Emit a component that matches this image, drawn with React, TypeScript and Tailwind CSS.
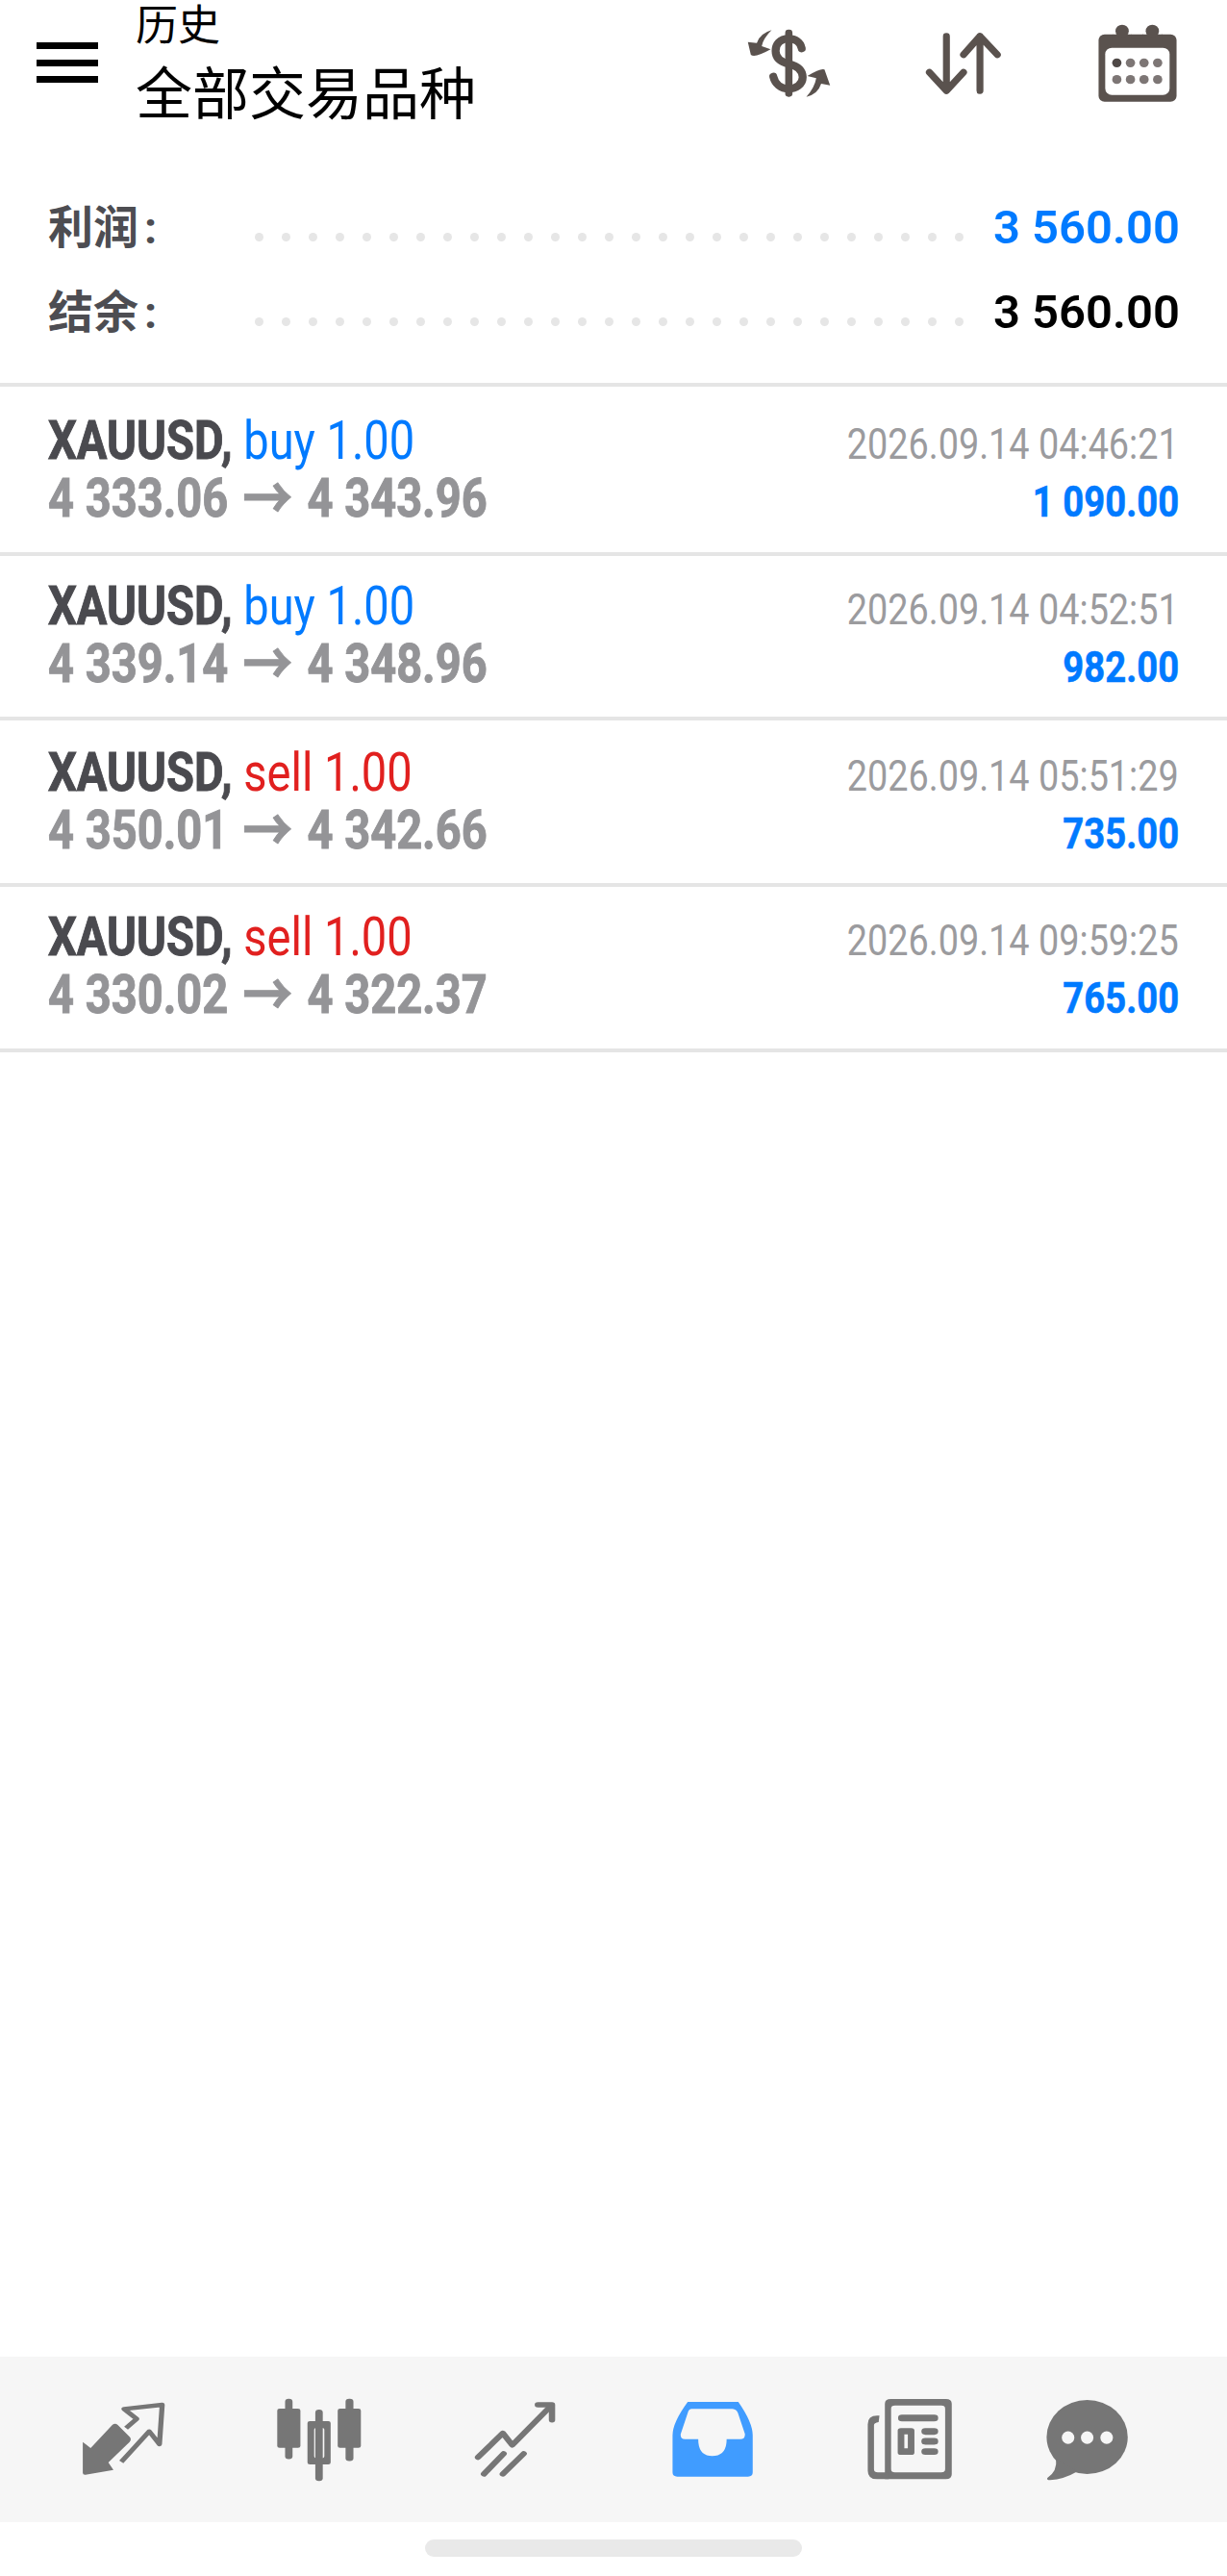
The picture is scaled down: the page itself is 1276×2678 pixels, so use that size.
import React from "react";

const trades = [
  { side: "buy", box: "h-[176px] pt-[26px]", open: "4 333.06", close: "4 343.96", time: "2026.09.14 04:46:21", profit: "1 090.00" },
  { side: "buy", box: "h-[171px] pt-[22px]", open: "4 339.14", close: "4 348.96", time: "2026.09.14 04:52:51", profit: "982.00" },
  { side: "sell", box: "h-[173px] pt-[24px]", open: "4 350.01", close: "4 342.66", time: "2026.09.14 05:51:29", profit: "735.00" },
  { side: "sell", box: "h-[172px] pt-[22px]", open: "4 330.02", close: "4 322.37", time: "2026.09.14 09:59:25", profit: "765.00" },
];

const dots = Array.from({ length: 27 }, (_, i) => i);

function DotLine() {
  return (
    <div className="flex gap-[19px] mt-[18px] -ml-[1px]">
      {dots.map((d) => (
        <span key={d} className="w-[9px] h-[9px] rounded-full bg-[#e6e6e6]" />
      ))}
    </div>
  );
}

function DollarIcon() {
  return (
    <svg viewBox="105 85 265 225" preserveAspectRatio="none" className="w-[91px] h-[75px]" fill="#5a524e">
      <rect x="226" y="93" width="22" height="210" rx="10" />
      <path d="M276 152C272 132 256 122 237 122C208 122 197 140 197 160C197 185 215 195 237 200C265 207 279 222 279 242C279 265 258 278 237 278C212 278 195 262 190 240" fill="none" stroke="#5a524e" strokeWidth="24" strokeLinecap="round" />
      <path d="M185 95Q150 105 140 135L113 132L122 172Q135 182 182 155L155 145Q160 120 185 95Z" />
      <path d="M290 303Q325 295 335 262L362 267L345 218Q335 212 293 238L320 245Q315 275 290 303Z" />
    </svg>
  );
}

function SortIcon() {
  return (
    <svg viewBox="650 95 240 205" preserveAspectRatio="none" className="w-[82px] h-[68px]" fill="none" stroke="#5a524e" strokeWidth="21" strokeLinecap="round" strokeLinejoin="round">
      <path d="M718 112V283M666 225L718 283L770 225" />
      <path d="M820 283V112M770 170L820 112L873 170" />
    </svg>
  );
}

function CalendarIcon() {
  return (
    <svg viewBox="1170 65 255 255" preserveAspectRatio="none" className="w-[88px] h-[85px]">
      <rect x="1180" y="103" width="235" height="210" rx="18" fill="#5a524e" />
      <rect x="1200" y="145" width="194" height="147" rx="20" fill="#fff" />
      <circle cx="1251" cy="95" r="29" fill="#fff" />
      <circle cx="1342" cy="95" r="29" fill="#fff" />
      <path d="M1222 103H1280V118H1312V103H1372V125H1222Z" fill="#5a524e" />
      <circle cx="1251" cy="93" r="20" fill="#5a524e" />
      <circle cx="1342" cy="93" r="20" fill="#5a524e" />
      {[192, 244].map((y) =>
        [1235, 1276, 1317, 1358].map((x) => (
          <circle key={`${x}-${y}`} cx={x} cy={y} r="14" fill={x === 1235 && y === 192 ? "#4f4947" : "#7d7675"} />
        ))
      )}
    </svg>
  );
}

function QuotesIcon() {
  return (
    <svg viewBox="205 200 225 240" preserveAspectRatio="none" className="w-[92px] h-[80px]">
      <path d="M215 328L235 347L290 275Q297 268 304 275L334 312Q340 320 334 328L280 392L293 415L222 430Q215 431 215 424Z" fill="#767676" />
      <path d="M325 285L352 256L320 225L417 212L410 335L384 295L313 390" fill="none" stroke="#767676" strokeWidth="13" strokeLinejoin="round" />
    </svg>
  );
}

function CandlesIcon() {
  return (
    <svg viewBox="695 175 240 280" preserveAspectRatio="none" className="w-[98px] h-[93px]" fill="#767676">
      <rect x="728" y="186" width="19" height="189" rx="9" />
      <rect x="708" y="217" width="59" height="123" rx="6" />
      <rect x="805" y="220" width="19" height="224" rx="9" />
      <path fillRule="evenodd" d="M791 256H838Q844 256 844 262V386Q844 392 838 392H791Q785 392 785 386V262Q785 256 791 256ZM808 277Q802 277 802 283V366Q802 372 808 372H822Q828 372 828 366V283Q828 277 822 277Z" />
      <rect x="882" y="186" width="20" height="195" rx="9" />
      <rect x="862" y="217" width="59" height="123" rx="6" />
    </svg>
  );
}

function TrendIcon() {
  return (
    <svg viewBox="1205 190 220 245" preserveAspectRatio="none" className="w-[90px] h-[82px]" fill="none" stroke="#767676" strokeLinecap="round" strokeLinejoin="round" strokeWidth="16">
      <path d="M1220 368L1283 293L1307 330L1400 215" />
      <path d="M1372 205H1408V252" />
      <path d="M1235 420L1285 357" />
      <path d="M1283 420L1336 357" />
    </svg>
  );
}

function InboxIcon() {
  return (
    <svg viewBox="140 190 220 245" preserveAspectRatio="none" className="w-[89px] h-[82px]">
      <path fillRule="evenodd" fill="#409cff" d="M185 196H315Q352 260 352 300V415Q352 428 340 428H158Q146 428 146 415V300Q146 260 185 196ZM195 218Q188 218 185 230L167 295Q165 312 178 312H212Q212 364 248 364Q285 364 285 312H320Q333 312 332 295L314 230Q310 218 300 218Z" />
    </svg>
  );
}

function NewsIcon() {
  return (
    <svg viewBox="640 180 230 265" preserveAspectRatio="none" className="w-[93px] h-[88px]" fill="#767676">
      <path fillRule="evenodd" d="M705 186H847Q862 186 862 201V422Q862 437 847 437H690V201Q690 186 705 186ZM716 206Q706 206 706 216V406Q706 416 716 416H835Q845 416 845 406V216Q845 206 835 206Z" />
      <path d="M676 238H670Q646 238 646 265V410Q646 437 670 437H700V416H672Q662 416 662 406V268Q662 260 674 258Z" />
      <rect x="724" y="235" width="103" height="21" rx="10" />
      <path fillRule="evenodd" d="M731 277H758Q766 277 766 285V353Q766 361 758 361H731Q723 361 723 353V285Q723 277 731 277ZM740 297V340H749V297Z" />
      <rect x="784" y="277" width="43" height="21" rx="10" />
      <rect x="784" y="308" width="43" height="21" rx="10" />
      <rect x="784" y="340" width="43" height="21" rx="10" />
    </svg>
  );
}

function ChatIcon() {
  return (
    <svg viewBox="1100 180 222 262" preserveAspectRatio="none" className="w-[90px] h-[87px]" fill="#767676">
      <ellipse cx="1210" cy="302" rx="104" ry="116" />
      <path d="M1130 370Q1134 410 1108 430Q1105 437 1115 437Q1150 435 1185 410Z" />
      {[1161, 1210, 1260].map((x) => (
        <ellipse key={x} cx={x} cy="304" rx="16" ry="20" fill="#f6f6f6" />
      ))}
    </svg>
  );
}

export default function App() {
  return (
    <div className="w-[1276px] h-[2678px] bg-white flex flex-col font-['Roboto','Noto_Sans_CJK_SC',sans-serif]">
      <header className="h-[142px] flex items-start shrink-0">
        <div className="ml-[38px] mt-[44px] w-[64px] h-[42px] flex flex-col justify-between">
          <span className="h-[7px] bg-black" />
          <span className="h-[7px] bg-black" />
          <span className="h-[7px] bg-black" />
        </div>
        <div className="ml-[39px] pt-[1px] flex flex-col text-black">
          <span className="text-[44px] leading-[52px]">历史</span>
          <span className="mt-[2px] text-[59px] leading-[87px]">全部交易品种</span>
        </div>
        <div className="ml-auto flex items-center mt-[23px] mr-[49px]">
          <DollarIcon />
          <div className="ml-[95px]"><SortIcon /></div>
          <div className="ml-[96px]"><CalendarIcon /></div>
        </div>
      </header>

      <section className="pt-[51px] pb-[29px] pl-[50px] pr-[49px] border-b-[4px] border-[#e5e5e5] shrink-0">
        <div className="h-[88px] flex items-center">
          <span className="w-[216px] text-[47px] font-bold text-[#4d4d52]">利润<span className="ml-[6px]">:</span></span>
          <DotLine />
          <span className="ml-auto text-[49px] font-semibold text-[#007aff]">3 560.00</span>
        </div>
        <div className="h-[88px] flex items-center">
          <span className="w-[216px] text-[47px] font-bold text-[#4d4d52]">结余<span className="ml-[6px]">:</span></span>
          <DotLine />
          <span className="ml-auto text-[49px] font-semibold text-black">3 560.00</span>
        </div>
      </section>

      {trades.map((t) => (
        <div key={t.time} className={`${t.box} shrink-0 px-[50px] border-b-[4px] border-[#e5e5e5] flex justify-between`}>
          <div className="flex flex-col">
            <div className="h-[60px] leading-[60px] text-[56px] whitespace-nowrap origin-left scale-x-[0.84]">
              <span className="font-bold text-[#4a4a4f] [-webkit-text-stroke:1px_#4a4a4f]">XAUUSD,</span>{" "}
              <span className={t.side === "buy" ? "text-[#007aff]" : "text-[#e1201f]"}>{t.side} 1.00</span>
            </div>
            <div className="h-[60px] leading-[60px] text-[56px] font-bold text-[#949497] [-webkit-text-stroke:1px_#949497] whitespace-nowrap origin-left scale-x-[0.84]">
              {t.open} <span className="ml-[4px] mr-[4px] text-[62px] align-[-4px]">→</span> {t.close}
            </div>
          </div>
          <div className="flex flex-col items-end pt-[4px]">
            <div className="h-[60px] leading-[60px] text-[45px] text-[#9b9b9e] whitespace-nowrap origin-right scale-x-[0.84]">{t.time}</div>
            <div className="h-[60px] leading-[60px] text-[45px] font-bold text-[#007aff] [-webkit-text-stroke:0.6px_#007aff] whitespace-nowrap origin-right scale-x-[0.85]">{t.profit}</div>
          </div>
        </div>
      ))}

      <div className="flex-1" />

      <nav className="h-[172px] bg-[#f6f6f6] pl-[26px] flex items-center shrink-0">
        <div className="w-[204px] flex justify-center"><QuotesIcon /></div>
        <div className="w-[204px] flex justify-center"><CandlesIcon /></div>
        <div className="w-[204px] flex justify-center"><TrendIcon /></div>
        <div className="w-[204px] flex justify-center pl-[2px]"><InboxIcon /></div>
        <div className="w-[204px] flex justify-center pl-[4px]"><NewsIcon /></div>
        <div className="w-[204px] flex justify-center pr-[34px]"><ChatIcon /></div>
      </nav>
      <div className="h-[56px] flex justify-center pt-[18px] shrink-0">
        <span className="block w-[392px] h-[18px] rounded-full bg-[#e9e9e9]" />
      </div>
    </div>
  );
}
